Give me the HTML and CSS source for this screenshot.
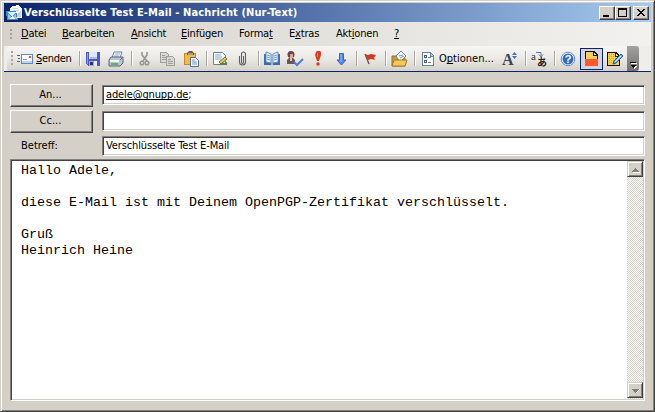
FILE: index.html
```html
<!DOCTYPE html>
<html lang="de">
<head>
<meta charset="utf-8">
<title>Verschlüsselte Test E-Mail - Nachricht (Nur-Text)</title>
<link rel="stylesheet" href="styles.css">
</head>
<body>
<div class="window">
  <header class="titlebar">
    <svg class="icon app" viewBox="0 0 16 16"><path d="M4 4l2-3 7-1 3 4v9H4z" fill="#f4f8fc"/><path d="M7 3h5M7 5h6" stroke="#c3d2e2"/><path d="M6 7l4 3 5-4v6H8z" fill="#c5cfdd"/><path d="M0 6h10l2 9H1z" fill="#3f8cc4"/><path d="M1 7h8l1 1-4 3z" fill="#d5eefc"/><path d="M2 9l4 3 4-3 1 5H2z" fill="#8cc6ea"/><path d="M3 14l3-3 4 3z" fill="#f4fbff"/></svg>
    <span class="title">Verschlüsselte Test E-Mail - Nachricht (Nur-Text)</span>
    <div class="caption">
      <button class="cap-btn"><svg viewBox="0 0 12 10"><path d="M2 7h6v2H2z"/></svg></button>
      <button class="cap-btn"><svg viewBox="0 0 12 10"><path d="M1 0h9v9H1zM2 2v6h7V2z" fill-rule="evenodd"/></svg></button>
      <button class="cap-btn close"><svg viewBox="0 0 12 10"><path d="M2 1h2v1h1v1h2V2h1V1h2v1H9v1H8v1H7v1h1v1h1v1h1v1H8V7H7V6H5v1H4v1H2V7h1V6h1V5h1V4H4V3H3V2H2z"/></svg></button>
    </div>
  </header>

  <nav class="menubar">
    <i class="grip"></i>
    <span class="m1"><u>D</u>atei</span><span class="m2"><u>B</u>earbeiten</span><span class="m3"><u>A</u>nsicht</span><span class="m4"><u>E</u>infügen</span><span class="m5">Forma<u>t</u></span><span class="m6">E<u>x</u>tras</span><span class="m7">Akt<u>i</u>onen</span><span class="m8"><u>?</u></span>
  </nav>

  <div class="toolbar">
    <div class="tools">
      <i class="grip"></i>
      <button class="tool send"><svg class="icon" viewBox="0 0 16 16"><path d="M0 4h3v1H0zM1 7h2v1H1zM0 10h3v1H0z" fill="#3c5e9f"/><path d="M4 3h12v10H4z" fill="#6685b9"/><path d="M5 4h10v8H5z" fill="#f8fbff"/><path d="M5 10h10v2H5z" fill="#c1d3ee"/><path d="M12 5h2v2h-2z" fill="#e35222"/><path d="M6 8h4v1H6z" fill="#7b9bca"/></svg><span class="t-send"><u>S</u>enden</span></button>
      <i class="sep"></i>
      <button class="tool"><svg class="icon" viewBox="0 0 16 16"><path d="M1 1h14v14H3l-2-2z" fill="#4a5cc4"/><path d="M2 2h1v11H2z" fill="#929bed"/><path d="M4 1h8v7H4z" fill="#dfe6ff"/><path d="M5 6h7v2H5z" fill="#b1b9e8"/><path d="M4 10h8v5H4z" fill="#9ba9d8"/><path d="M5 11h3v3H5z" fill="#2a327d"/><path d="M9 10h3v5H9z" fill="#e9edff"/></svg></button>
      <button class="tool"><svg class="icon smooth" viewBox="0 0 16 16"><path d="M6 1h8l-2 6H4z" fill="#f5faff" stroke="#6787a8"/><path d="M7 3h5M6 5h5" stroke="#91abc9"/><path d="M3 6h12v6l-3 3H1V9z" fill="#b9c6d1" stroke="#56667b"/><path d="M2 9h9v2H2z" fill="#f2f4f5"/><path d="M3 13h7" stroke="#5aba55" stroke-width="2"/><path d="M12 9l3-3" stroke="#666f7b"/></svg></button>
      <i class="sep"></i>
      <button class="tool"><svg class="icon smooth" viewBox="0 0 16 16" fill="none" stroke="#989792"><path d="M5 1v3l5 6M10 1v3L6 10" stroke-width="1.600"/><circle cx="5" cy="12" r="1.800" stroke-width="1.500"/><circle cx="10" cy="12" r="1.800" stroke-width="1.500"/></svg></button>
      <button class="tool"><svg class="icon" viewBox="0 0 16 16" fill="#dad8d4" stroke="#a09f9a"><path d="M.5 1.500h6l2 2v8h-8z"/><path d="M6.500 5.500h6l2 2v7h-8z"/><path d="M2 4h3M2 6h4M2 8h4M8 8h3M8 10h5M8 12h5"/></svg></button>
      <button class="tool"><svg class="icon smooth" viewBox="0 0 16 16"><path d="M1 2h12v12H1z" fill="#c88726"/><path d="M2 3h10v10H2z" fill="#f3bb42"/><path d="M4 2l2-2h3l2 2v2H4z" fill="#6b5c50"/><path d="M5 3h5" stroke="#eee1aa"/><path d="M7.500 6.500h5l3 3v6h-8z" fill="#f5f9ff" stroke="#526e9e"/><path d="M9 9h3M9 11h5M9 13h5" stroke="#7893bd"/></svg></button>
      <i class="sep"></i>
      <button class="tool"><svg class="icon smooth" viewBox="0 0 16 16"><path d="M1.500 1.500h9l3 3v9h-12z" fill="#f6fbff" stroke="#6782a1"/><path d="M3 4h6M3 6h7M3 8h6" stroke="#8da9ca"/><path d="M8 13l2-3 2 2 3-1v3H4z" fill="#548548"/><path d="M7 11l6-5 2 2-6 5z" fill="#edc348" stroke="#6e7041"/></svg></button>
      <button class="tool"><svg class="icon smooth" viewBox="0 0 16 16" fill="none" stroke="#56616f"><path d="M4.500 5v6a3 3 0 0 0 6 0V3a2 2 0 0 0-4 0v8c0 2 2 2 2 0V5" stroke-width="1.100"/></svg></button>
      <i class="sep"></i>
      <button class="tool"><svg class="icon smooth" viewBox="0 0 16 16"><path d="M0 3h16v11H0z" fill="#3969b3"/><path d="M2 1l5 2v9l-5-1zM14 1L9 3v9l5-1z" fill="#eff8ff" stroke="#668db8"/><path d="M3 4l3 1M3 6l3 1M3 8l3 1M10 5l3-1M10 7l3-1M10 9l3-1" stroke="#6d94bd"/><path d="M7 3h2v11H7z" fill="#8db1dd"/></svg></button>
      <button class="tool"><svg class="icon smooth" viewBox="0 0 16 16"><circle cx="4" cy="3.500" r="3.500" fill="#6c4545"/><path d="M3 3h3v4H3z" fill="#dca6a0"/><path d="M0 13V9l2-2h4l2 2v4z" fill="#6a555b"/><path d="M3 7h2v3H3z" fill="#dca"/><path d="M7 11l3 3 6-6" fill="none" stroke="#4b7fd1" stroke-width="2"/></svg></button>
      <button class="tool"><svg class="icon smooth" viewBox="0 0 16 16"><path d="M6 1l1-1h3l1 1v3L9 10H7L5 4z" fill="#da3c20"/><path d="M7 2h1v4H7z" fill="#f68b63"/><circle cx="8" cy="13" r="1.800" fill="#d53c24"/></svg></button>
      <button class="tool"><svg class="icon smooth" viewBox="0 0 16 16"><path d="M6.500 2.500h4V9H13l-4.500 5L4 9h2.500z" fill="#5586e4" stroke="#3e65bb"/><path d="M8 3v8" stroke="#9dbbff"/></svg></button>
      <i class="sep"></i>
      <button class="tool"><svg class="icon smooth" viewBox="0 0 16 16"><path d="M3 3l3 1 3-1 5 1-2 3 1 2-4-1-3 1z" fill="#d33a23"/><path d="M3 3l4 10" stroke="#704b46" stroke-width="1.300"/></svg></button>
      <i class="sep"></i>
      <button class="tool"><svg class="icon smooth" viewBox="0 0 16 16"><path d="M1 5h5l2 2h6v8H1z" fill="#d39b2f" stroke="#8a7136"/><path d="M5 5l5-5 5 5-6 6z" fill="#f7fbff" stroke="#67839e"/><path d="M8 5l4-1M9 7l4-2" stroke="#7894bc"/><path d="M1 15l2-6h13l-2 6z" fill="#f5c85a" stroke="#a17a2b"/></svg></button>
      <i class="sep"></i>
      <button class="tool options"><svg class="icon" viewBox="0 0 16 16"><path d="M2.500 1.500h8l3 3v10h-11z" fill="#f6faff" stroke="#6883a3"/><path d="M10 2v3h3" fill="#b6cce8" stroke="#6883a3"/><path d="M4 4h3v3H4zM4 9h3v3H4z" fill="#4d5b79"/><path d="M5 5h1v1H5zM5 10h1v1H5z" fill="#fff"/><path d="M8 6h3v1H8zM8 11h3v1H8z" fill="#607dad"/></svg><span class="t-opt">O<u>p</u>tionen...</span></button>
      <button class="tool"><svg class="icon smooth" viewBox="0 0 16 16"><text x="0" y="14" class="glyph-a">A</text><path d="M12.500 1l2.500 3h-5zM12.500 8L10 5h5z" fill="#4773ae"/></svg></button>
      <i class="sep"></i>
      <button class="tool"><svg class="icon smooth" viewBox="0 0 16 16"><text x="0" y="9" class="glyph-s">a</text><text x="6" y="15" class="glyph-j">あ</text><path d="M5 1.500h5V5M8 3.500L10 6l2-2.500" fill="none" stroke="#5979ae"/></svg></button>
      <i class="sep"></i>
      <button class="tool help"><svg class="icon smooth" viewBox="0 0 16 16"><circle cx="8" cy="8" r="6.800" fill="#f7fcff" stroke="#6288ce"/><circle cx="8" cy="8" r="5.500" fill="#306cc5"/><text x="8" y="12" class="glyph-q">?</text></svg></button>
      <button class="tool pressed"><svg class="icon" viewBox="0 0 16 16"><path d="M1 0h9l4 4v5H1z" fill="#111"/><path d="M2 1h7v4h4v3H2z" fill="#f2cf61"/><path d="M10 2l2 2h-2z" fill="#f6e39c"/><path d="M1 8h13v7H1z" fill="#ff5928"/></svg></button>
      <button class="tool sign"><svg class="icon" viewBox="0 0 16 16"><path d="M0 1h9l4 4v10H0z" fill="#111"/><path d="M1 2h7v4h4v8H1z" fill="#f5d04f"/><path d="M2 3.500h5M2 5.500h5M2 7.500h8M2 9.500h8M2 11.500h8" stroke="#c9a640" stroke-dasharray="1"/><path d="M9 3l2 2H9z" fill="#f6e39c"/><path d="M6 13l1-3 7-7 2 2-7 7z" fill="#70b4e9" stroke="#235591" class="smooth"/><path d="M8 11l6-6" stroke="#d6f6ff" class="smooth"/></svg></button>
    </div>
    <div class="overflow"><svg viewBox="0 0 12 25"><path d="M4 17h6v1H4zM4 20h6l-3 3z" fill="#fff"/><path d="M3 16h6v1H3zM3 19h6l-3 3z"/></svg></div>
  </div>

  <main class="form">
    <div class="row"><button class="push"><span class="t-an">An...</span></button><div class="field"><span class="t-addr"><u>adele@gnupp.de</u>;</span></div></div>
    <div class="row"><button class="push"><span class="t-cc">Cc...</span></button><div class="field"></div></div>
    <div class="row subject"><label><span class="t-subj">Betreff:</span></label><div class="field"><span class="t-val">Verschlüsselte Test E-Mail</span></div></div>
    <div class="message">
      <div class="text">Hallo Adele,

diese E-Mail ist mit Deinem OpenPGP-Zertifikat verschlüsselt.

Gruß
Heinrich Heine</div>
      <div class="scrollbar">
        <button class="arrow"><svg viewBox="0 0 12 12"><path d="M4 9h7v1H4z" fill="#fff"/><path d="M6 5h1v1h1v1h1v1h1v1H3V8h1V7h1V6h1z" fill="#808080"/></svg></button>
        <button class="arrow"><svg viewBox="0 0 12 12"><path d="M7 9V8h1V7h1V6h1V5h1v1h-1v1H9v1H8v1z" fill="#fff"/><path d="M3 5h7v1H9v1H8v1H7v1H6V8H5V7H4V6H3z" fill="#808080"/></svg></button>
      </div>
    </div>
  </main>
</div>
</body>
</html>
```
FILE: styles.css
```css
* { box-sizing: border-box; }
body {
  margin: 0;
  overflow: hidden;
  font: 11px/14px "DejaVu Sans Condensed", "DejaVu Sans", sans-serif;
  font-stretch: condensed;
  color: #000;
}
button { margin: 0; padding: 0; border: 0; background: none; font: inherit; color: inherit; }
svg { display: block; flex: none; shape-rendering: crispEdges; overflow: visible; }
.smooth { shape-rendering: auto; }
span { white-space: nowrap; }
u { text-decoration-thickness: 1px; text-underline-offset: 1px; text-decoration-skip-ink: none; }
.icon { width: 16px; height: 16px; }

.window {
  width: 655px;
  height: 412px;
  padding: 1px 2px 2px 2px;
  background: #d4d0c8;
  border: 1px solid #d4d0c8;
  border-right-color: #404040;
  border-bottom-color: #404040;
  box-shadow: inset 1px 1px #fff, inset -1px -1px #808080;
}

.titlebar {
  display: flex;
  align-items: center;
  width: 647px;
  height: 19px;
  margin: 1px 0 0 1px;
  padding: 0 2px;
  background: linear-gradient(90deg, #0a246a, #a6caf0);
}
.title { margin-left: 2px; color: #fff; font-weight: bold; letter-spacing: 0.11px; }
.caption { display: flex; margin-left: auto; }
.cap-btn {
  display: flex;
  width: 16px;
  height: 14px;
  padding: 2px;
  background: #d4d0c8;
  border: 1px solid;
  border-color: #fff #404040 #404040 #fff;
  box-shadow: inset -1px -1px #808080;
}
.cap-btn svg { width: 12px; height: 10px; margin: -1px; }
.close { margin-left: 2px; }

.menubar {
  display: flex;
  align-items: center;
  gap: 16px;
  width: 647px;
  height: 24px;
  margin-left: 1px;
  padding-left: 6px;
  background: linear-gradient(90deg, #d7d3cb, #f2f1ef);
}
.grip {
  width: 4px;
  height: 15px;
  flex: none;
  background: repeating-linear-gradient(#a5a29b 0 2px, transparent 2px 4px) 0 0 / 2px 100% no-repeat;
}
.menubar .grip { height: 11px; margin-right: -9px; }
.menubar span { flex: none; letter-spacing: -0.2px; }
.m1 { width: 25px; } .m2 { width: 53px; } .m3 { width: 34px; } .m4 { width: 42px; }
.m5 { width: 34px; } .m6 { width: 31px; } .m7 { width: 42px; } .m8 { width: 6px; }

.toolbar {
  display: flex;
  width: 647px;
  height: 26px;
  margin-left: 1px;
  padding: 0 12px 0 3px;
  background: #efeeeb;
  border-bottom: 1px solid #0a246a;
}
.tools {
  display: flex;
  align-items: center;
  width: 620px;
  padding-left: 4px;
  background: linear-gradient(#f7f6f4, #ebe9e5 50%, #d5d1c9);
  border-radius: 3px 0 0 3px;
}
.tool { display: flex; align-items: center; width: 23px; height: 16px; flex: none; }
.tools .grip { margin-right: 2px; }
.send { width: 62px; }
.send span { margin-left: 3px; letter-spacing: -0.3px; }
.options { width: 82px; }
.options span { margin-left: 3px; }
.sep { width: 6px; height: 15px; flex: none; background: linear-gradient(90deg, #aaa79f 0 1px, #fff 1px 2px, transparent 2px); }
.help { width: 20px; }
.pressed { width: 23px; height: 22px; padding-left: 3px; border: 1px solid #0a246a; background: #d4d5dc; }
.sign { padding-left: 4px; }
.overflow { width: 12px; height: 25px; flex: none; background: linear-gradient(#a3a29f, #707070); border-radius: 0 3px 3px 0; }
.overflow svg { width: 12px; height: 25px; }
.glyph-a { font: bold 16px "Liberation Serif", serif; fill: #3d4651; }
.glyph-s { font: 11px "Liberation Serif", serif; fill: #333; }
.glyph-j { font: bold 10px "Noto Sans CJK JP", sans-serif; fill: #222; }
.glyph-q { font: bold 11px "Liberation Sans", sans-serif; fill: #fff; text-anchor: middle; }

.form { display: flex; flex-direction: column; gap: 3px; margin: 12px 6px 0 7px; }
.row { display: flex; height: 23px; }
.subject { height: 20px; }
.push {
  width: 83px;
  height: 23px;
  flex: none;
  padding: 0 2px 1px 0;
  border: 1px solid;
  border-color: #fff #404040 #404040 #fff;
  box-shadow: inset -1px -1px #808080;
}
.row label { width: 83px; padding: 3px 0 0 11px; flex: none; }
.field, .message {
  border: 1px solid;
  border-color: #808080 #fff #fff #808080;
  box-shadow: inset 1px 1px #404040, inset -1px -1px #d4d0c8;
  background: #fff;
}
.field { width: 543px; height: 20px; margin: 1px 0 0 9px; padding: 2px 0 0 3px; letter-spacing: -0.13px; }
.subject .field { margin-top: 0; }
.message { display: flex; width: 635px; height: 242px; padding: 1px; }
.text { flex: 1; padding: 2px 0 0 9px; font: 13.33px/16px "Liberation Mono", monospace; white-space: pre; }
.scrollbar {
  display: flex;
  flex-direction: column;
  justify-content: space-between;
  width: 16px;
  padding-bottom: 1px;
  background: repeating-conic-gradient(#fff 0 25%, #d4d0c8 0 50%) 0 0 / 2px 2px;
}
.arrow {
  width: 16px;
  height: 16px;
  padding: 1px;
  background: #d4d0c8;
  border: 1px solid;
  border-color: #d4d0c8 #404040 #404040 #d4d0c8;
  box-shadow: inset 1px 1px #fff, inset -1px -1px #808080;
}
.arrow svg { width: 12px; height: 12px; }
```
